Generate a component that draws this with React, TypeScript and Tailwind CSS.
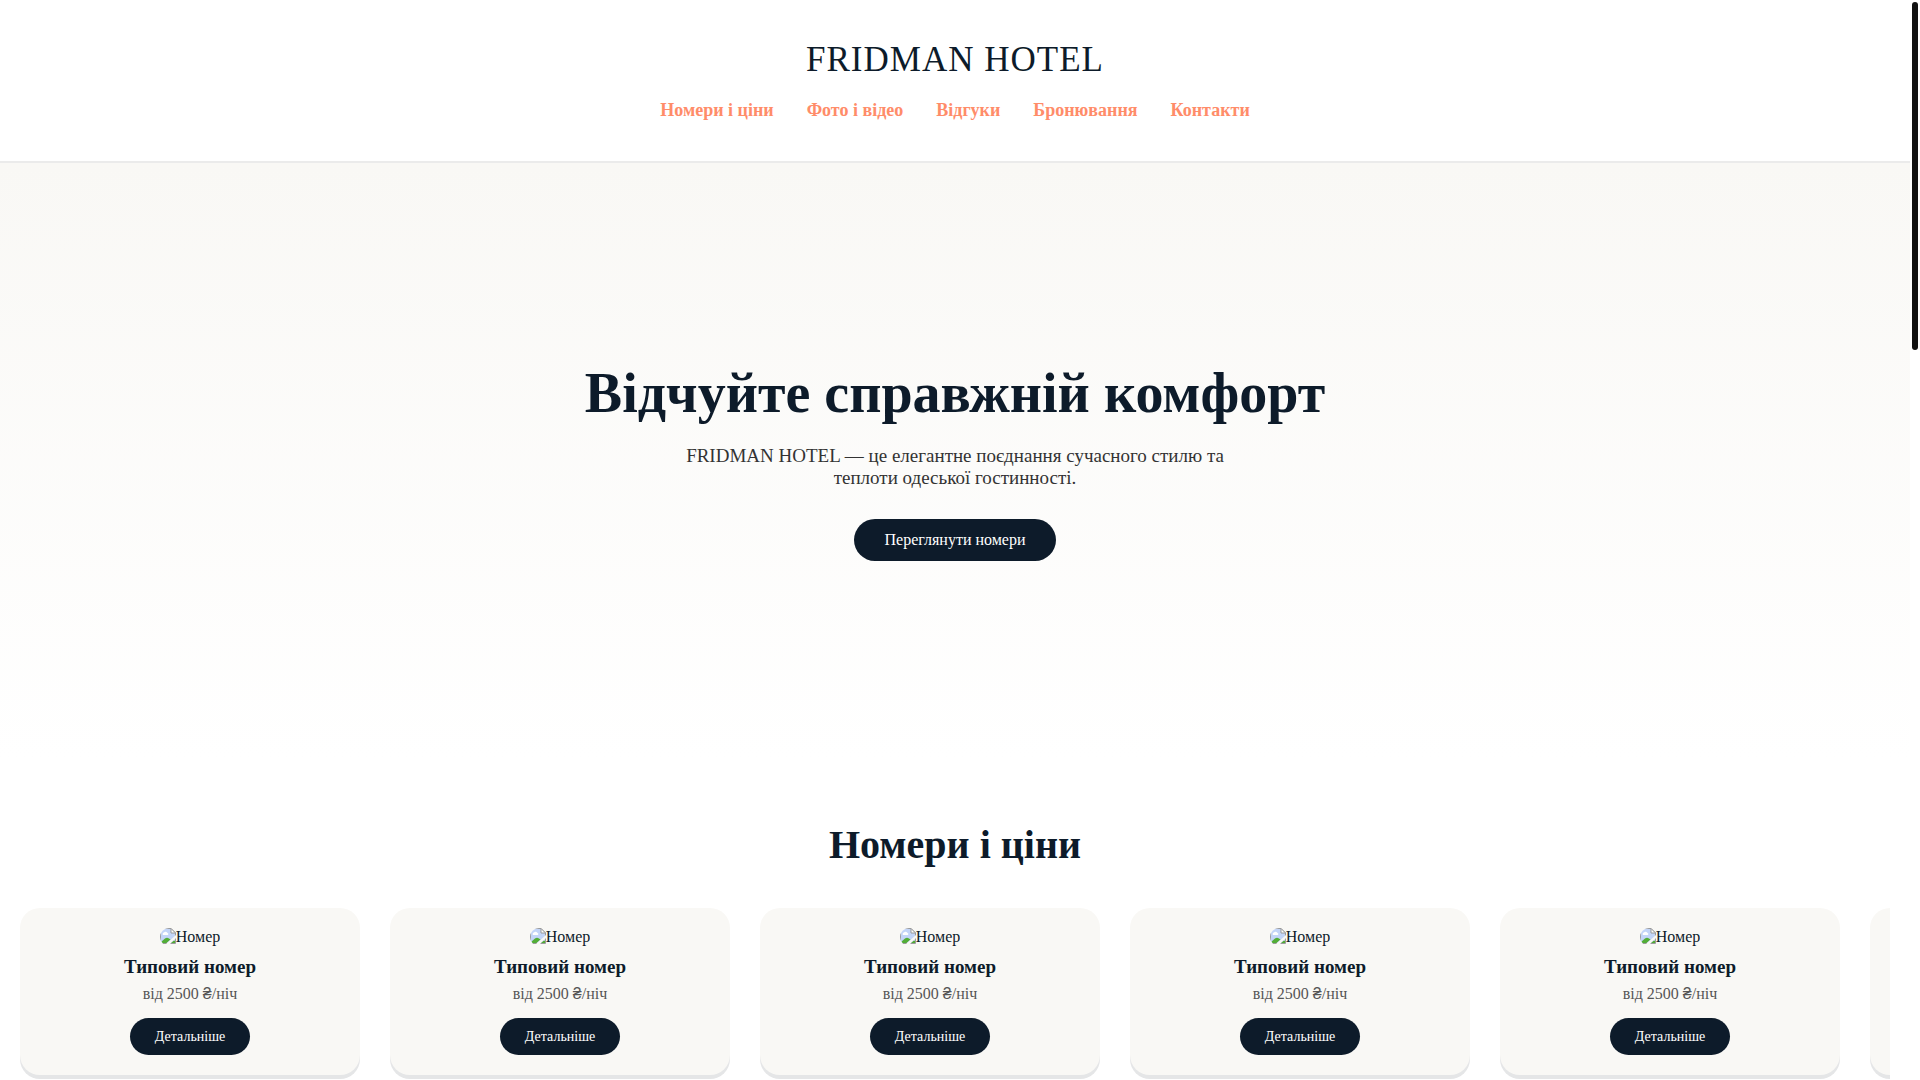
const links = ['Номери і ціни', 'Фото і відео', 'Відгуки', 'Бронювання', 'Контакти'];
const rooms = [1, 2, 3, 4, 5, 6];

const BrokenImage = () => (
  <svg width="16" height="16" viewBox="0 0 16 16" className="shrink-0">
    <path d="M0.5 0.5h10.5l4.5 4.5v10.5h-15z" fill="#c3d5f8" stroke="#9a9a9a" />
    <path d="M3 7a1.5 1.5 0 0 1 1-2.5a2 2 0 0 1 3.5 0.5a1.2 1.2 0 0 1 0.5 2z" fill="#fff" />
    <path d="M1 15v-1l4-3.5q2-1.5 4 0l1.5 1-4 3.5z" fill="#53ad36" />
    <path d="M6 16l10-9v3l-6 6z" fill="#f9f8f5" />
    <path d="M11 15l3-2.5 1 0.5v2z" fill="#53ad36" />
    <path d="M11 0.5v4.5h4.5z" fill="#fff" stroke="#9a9a9a" />
  </svg>
);

const RoomCard = () => (
  <article className="flex w-[340px] shrink-0 flex-col items-center rounded-[20px] bg-[#f9f8f5] p-5 shadow-[0_4px_0_#e5e6e7]">
    <div className="mb-[9px] flex h-[18px] items-start overflow-hidden rounded-l-full text-base leading-[18px]">
      <BrokenImage />
      <span>Номер</span>
    </div>
    <h3 className="mb-[5px] text-[19px] leading-6 font-bold">Типовий номер</h3>
    <p className="mb-[14px] text-base leading-5 text-[#555]">
      від 2500 <span className="font-['Liberation_Sans',sans-serif]">₴</span>/ніч
    </p>
    <button className="rounded-full bg-[#0d1b2a] px-[25px] py-[10px] text-[14px] leading-[17px] text-white">Детальніше</button>
  </article>
);

export default function App() {
  return (
    <div className="flex h-screen overflow-hidden bg-white font-['Liberation_Serif',serif] text-[#0d1b2a]">
      <div className="min-w-0 flex-1">
        <header className="flex flex-col items-center border-b-2 border-[#ebebeb] py-10">
          <div className="text-[35px] leading-10 tracking-[1px]">FRIDMAN HOTEL</div>
          <nav className="mt-5 flex gap-[33px] text-[18px] leading-[21px] font-bold text-[#ff8c69]">
            {links.map((link) => <a key={link} href="#">{link}</a>)}
          </nav>
        </header>
        <section className="flex h-[595px] flex-col items-center justify-center bg-linear-to-b from-[#f9f8f5] to-white text-center">
          <h1 className="mb-5 text-[56px] leading-[64px] font-bold">Відчуйте справжній комфорт</h1>
          <p className="mb-[30px] w-[600px] text-[19px] leading-[22px] text-[#333]">FRIDMAN HOTEL — це елегантне поєднання сучасного стилю та теплоти одеської гостинності.</p>
          <button className="rounded-full bg-[#0d1b2a] px-[30px] py-3 text-base leading-[18px] text-white">Переглянути номери</button>
        </section>
        <section className="px-5 pt-16">
          <h2 className="mb-10 text-center text-[40px] leading-[46px] font-bold">Номери і ціни</h2>
          <div className="flex gap-[30px] overflow-hidden pb-5">
            {rooms.map((room) => <RoomCard key={room} />)}
          </div>
        </section>
      </div>
      <div className="w-[10px] p-[2px]">
        <div className="h-[348px] rounded-full bg-[#111]" />
      </div>
    </div>
  );
}
